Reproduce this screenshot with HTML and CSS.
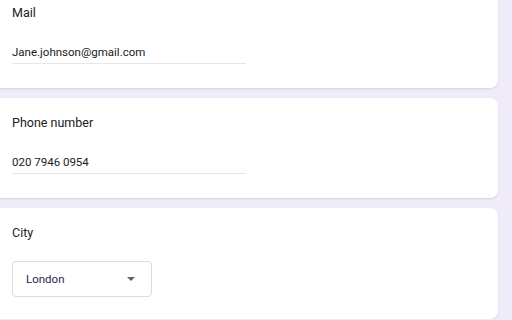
FILE: index.html
```html
<!DOCTYPE html>
<html lang="en">
<head>
    <meta charset="UTF-8">
    <meta name="viewport" content="width=device-width, initial-scale=1.0">
    <title>Contact details</title>
    <link rel="stylesheet" href="styles.css">
</head>
<body>
    <form class="form-list">
        <div class="question-card">
            <div class="question-title">Mail</div>
            <div class="text-answer">Jane.johnson@gmail.com</div>
        </div>

        <div class="question-card">
            <div class="question-title">Phone number</div>
            <div class="text-answer">020 7946 0954</div>
        </div>

        <div class="question-card city-card">
            <div class="question-title">City</div>
            <div class="dropdown">
                <span class="dropdown-value">London</span>
                <svg class="dropdown-arrow" width="8" height="4" viewBox="0 0 8 4">
                    <path d="M0 0 L8 0 L4 4 Z" fill="#5f6368"/>
                </svg>
            </div>
        </div>
    </form>
</body>
</html>
```

FILE: styles.css
```css
body {
    font-family: Roboto, "Noto Sans", Arial, sans-serif;
    background-color: #f0ebf8;
    margin: 0;
    overflow: hidden;
}
.form-list {
    display: flex;
    flex-direction: column;
    gap: 10px;
    margin-top: -12px;
    margin-left: -10px;
    width: 508px;
}
.question-card {
    background-color: #fff;
    border-radius: 8px;
    box-shadow: 0 1px 2px rgba(60, 64, 67, 0.15);
    padding: 17px 22px 24px;
}
.question-title {
    color: #202124;
    font-size: 12.5px;
    line-height: 16px;
}
.text-answer {
    margin-top: 24px;
    width: 234px;
    font-size: 11.5px;
    line-height: 14px;
    color: #202124;
    padding-bottom: 4px;
    border-bottom: 1px solid #e6e6e6;
}
.city-card {
    padding-bottom: 22px;
}
.dropdown {
    margin-top: 20px;
    width: 140px;
    height: 36px;
    box-sizing: border-box;
    border: 1px solid #dadce0;
    border-radius: 4px;
    display: flex;
    align-items: center;
    justify-content: space-between;
    padding: 0 16px 0 13px;
}
.dropdown-value {
    font-size: 11.5px;
    color: #1f1f4d;
}
.dropdown-arrow {
    flex-shrink: 0;
}
```
